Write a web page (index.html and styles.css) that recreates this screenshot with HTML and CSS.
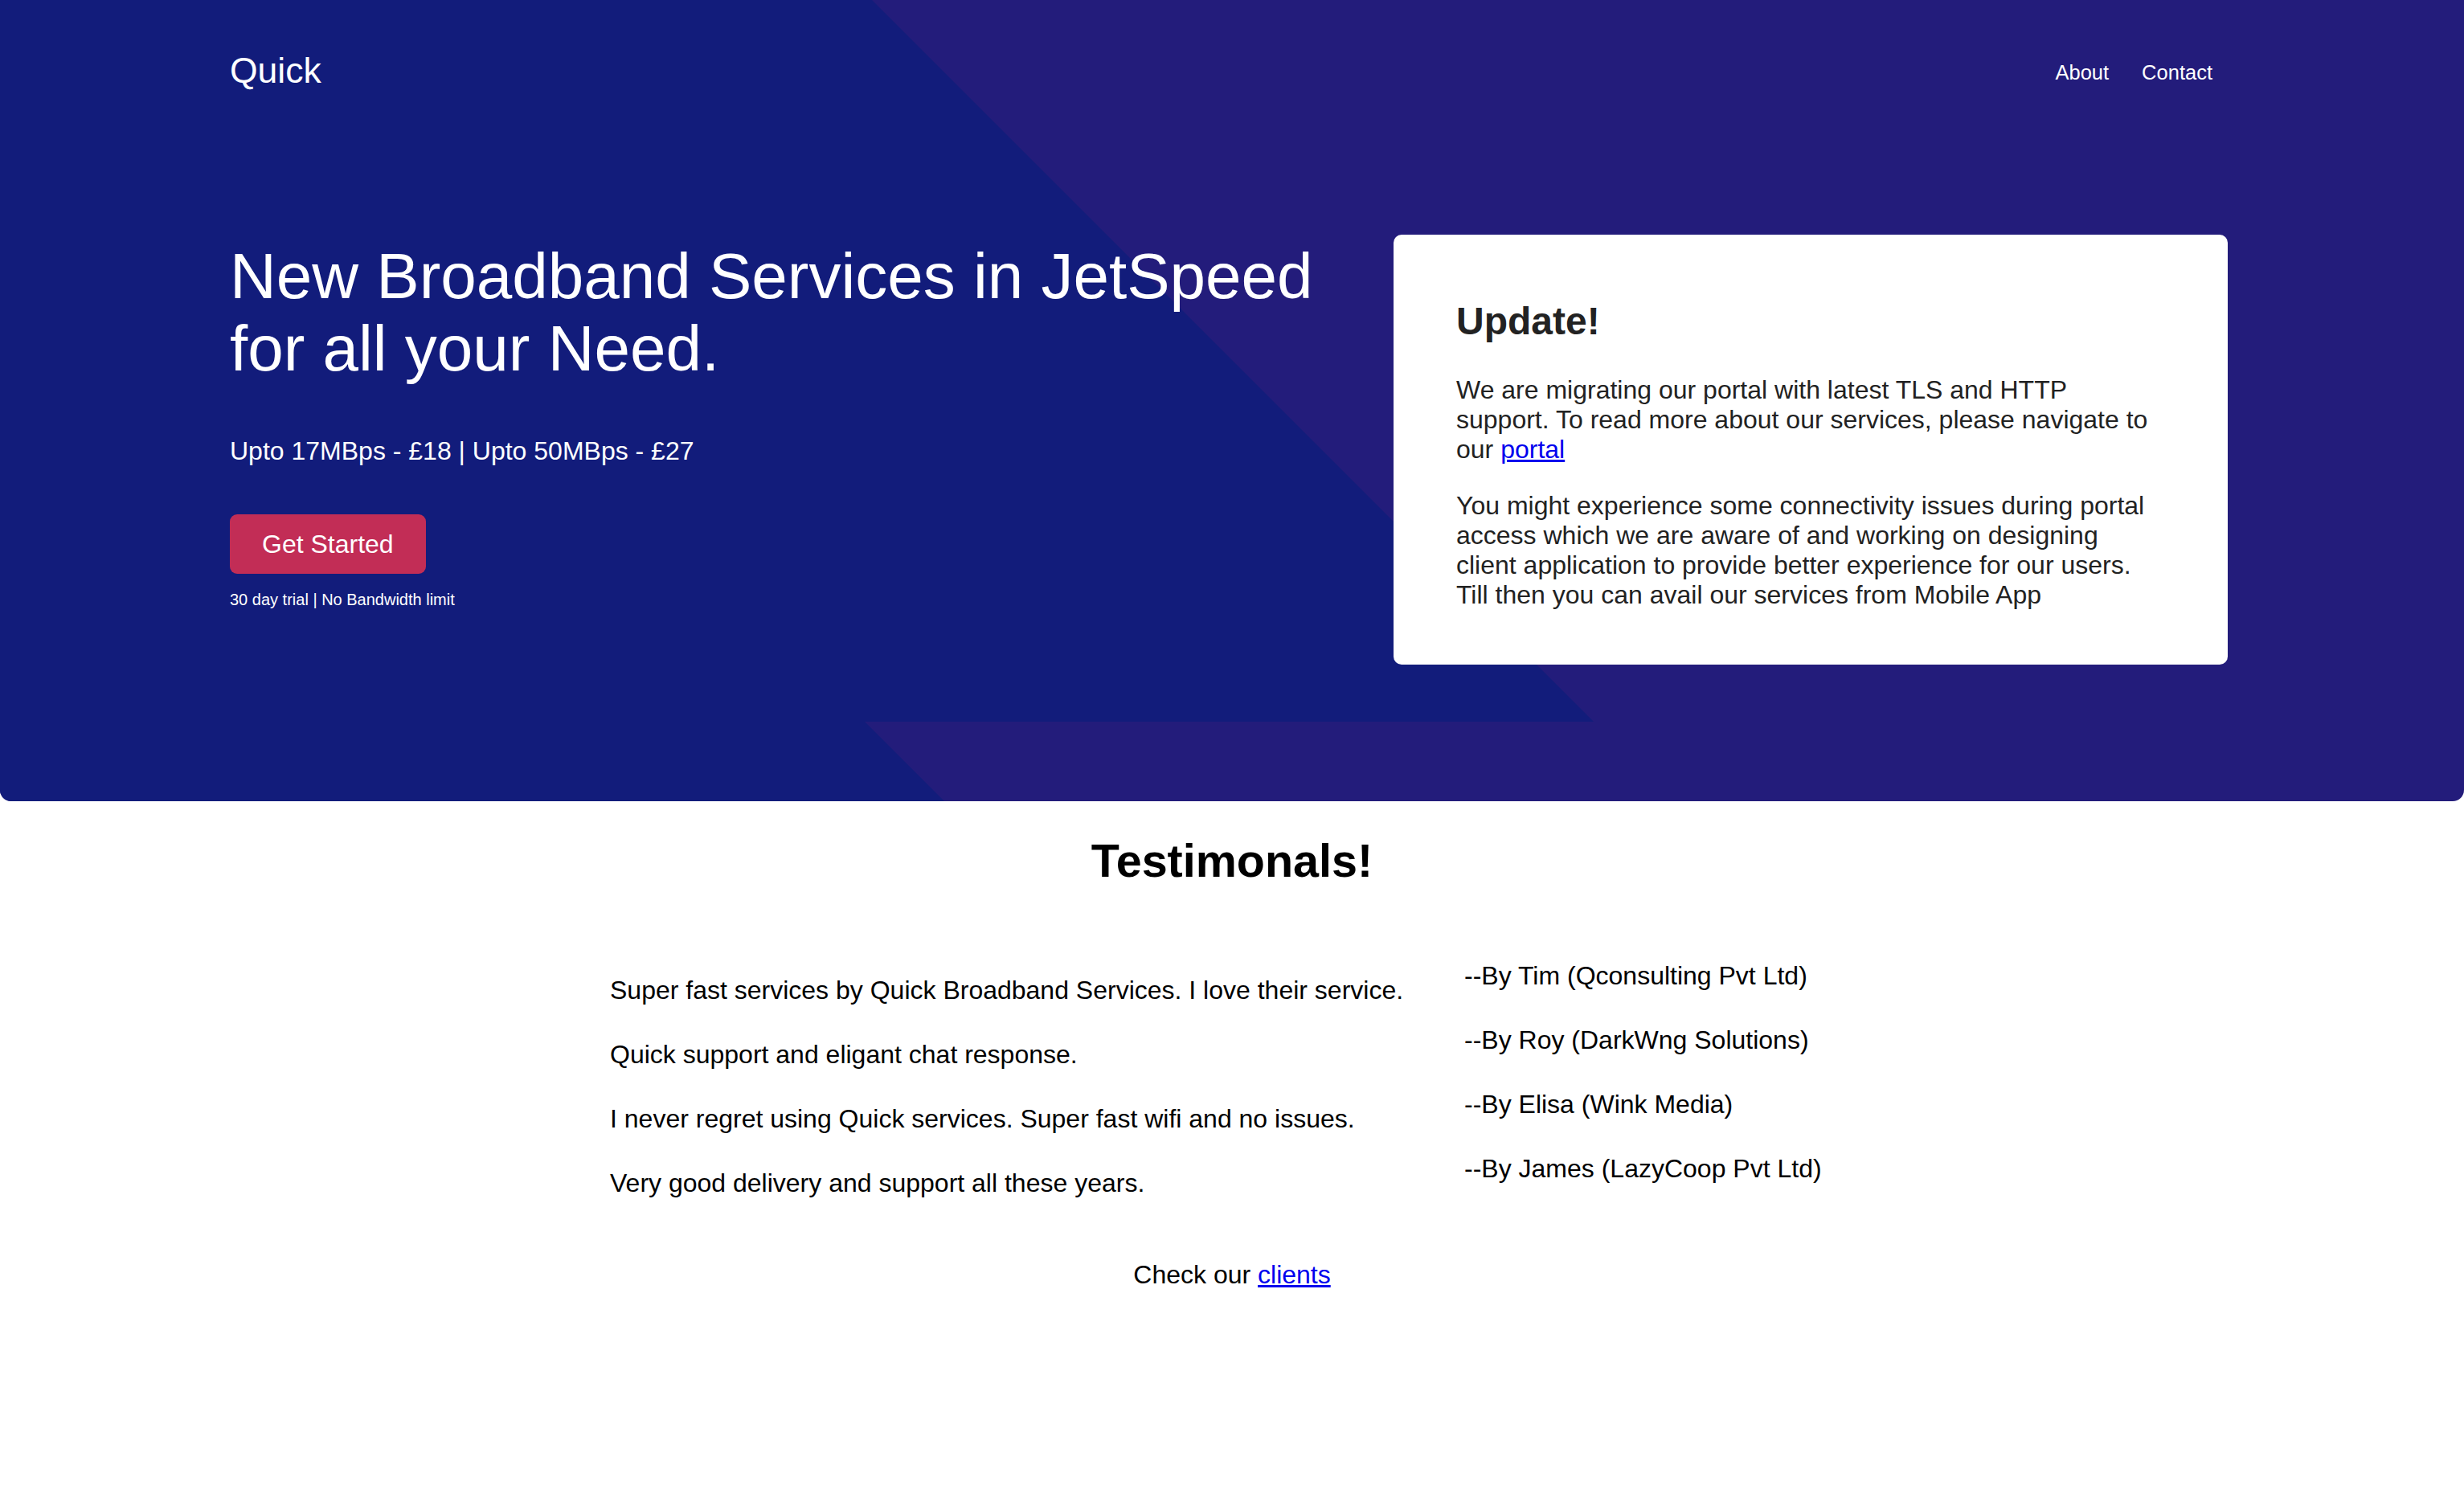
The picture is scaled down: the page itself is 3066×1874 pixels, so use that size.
FILE: index.html
```html
<!DOCTYPE html>
<html lang="en">
<head>
<meta charset="utf-8">
<title>Quick Broadband</title>
<link rel="stylesheet" href="styles.css">
</head>
<body>
<section class="hero">
  <div class="hero-inner">
    <header class="topbar">
      <div class="logo">Quick</div>
      <nav class="nav">
        <a href="#" class="nav-link">About</a>
        <a href="#" class="nav-link">Contact</a>
      </nav>
    </header>
    <div class="hero-row">
      <div class="hero-copy">
        <h1 class="hero-title">New Broadband Services in JetSpeed for all your Need.</h1>
        <p class="hero-sub">Upto 17MBps - £18 | Upto 50MBps - £27</p>
        <a href="#" class="cta">Get Started</a>
        <p class="hero-note">30 day trial | No Bandwidth limit</p>
      </div>
      <div class="card">
        <h2 class="card-title">Update!</h2>
        <p class="card-text card-text-first">We are migrating our portal with latest TLS and HTTP support. To read more about our services, please navigate to our <a href="#" class="link">portal</a></p>
        <p class="card-text">You might experience some connectivity issues during portal access which we are aware of and working on designing client application to provide better experience for our users. Till then you can avail our services from Mobile App</p>
      </div>
    </div>
  </div>
</section>

<section class="testimonials">
  <h2 class="section-title">Testimonals!</h2>
  <div class="quotes">
    <div class="quote-col quote-col-left">
      <p class="quote">Super fast services by Quick Broadband Services. I love their service.</p>
      <p class="quote">Quick support and eligant chat response.</p>
      <p class="quote">I never regret using Quick services. Super fast wifi and no issues.</p>
      <p class="quote">Very good delivery and support all these years.</p>
    </div>
    <div class="quote-col">
      <p class="quote">--By Tim (Qconsulting Pvt Ltd)</p>
      <p class="quote">--By Roy (DarkWng Solutions)</p>
      <p class="quote">--By Elisa (Wink Media)</p>
      <p class="quote">--By James (LazyCoop Pvt Ltd)</p>
    </div>
  </div>
  <p class="clients">Check our <a href="#" class="link">clients</a></p>
</section>
</body>
</html>
```

FILE: styles.css
```css
* { box-sizing: border-box; }

html, body {
  margin: 0;
  padding: 0;
  background: #ffffff;
  font-family: "Liberation Sans", Arial, Helvetica, sans-serif;
}

.hero {
  position: relative;
  height: 997px;
  background: #231c7b;
  border-radius: 0 0 14px 14px;
  overflow: hidden;
  color: #ffffff;
}

.hero::before {
  content: "";
  position: absolute;
  left: 0;
  top: 0;
  width: 100%;
  height: 100%;
  background: #121c7b;
  clip-path: polygon(0 0, 1085px 0, 1983px 898px, 1076px 898px, 1175px 997px, 0 997px);
}

.hero-inner {
  position: relative;
  z-index: 1;
  padding: 0 294px 0 286px;
}

.topbar {
  display: flex;
  justify-content: space-between;
  align-items: center;
  padding-top: 62px;
  height: 113px;
}

.logo {
  font-size: 44.5px;
  line-height: 50px;
  color: #ffffff;
}

.nav {
  display: flex;
  gap: 41px;
  padding-right: 19px;
  padding-top: 5px;
}

.nav-link {
  color: #ffffff;
  text-decoration: none;
  font-size: 25.5px;
  line-height: 30px;
}

.hero-row {
  display: flex;
  align-items: flex-start;
  justify-content: space-between;
  margin-top: 179px;
}

.hero-copy {
  width: 1400px;
  padding-top: 7px;
}

.hero-title {
  margin: 0;
  font-size: 80px;
  line-height: 90px;
  font-weight: normal;
}

.hero-sub {
  margin: 63.6px 0 0;
  font-size: 32px;
  line-height: 36.8px;
}

.cta {
  display: inline-block;
  margin-top: 60.6px;
  padding: 18.6px 40px;
  background: #c22d56;
  color: #ffffff;
  text-decoration: none;
  font-size: 32px;
  line-height: 36.8px;
  border-radius: 9px;
}

.hero-note {
  margin: 21.5px 0 0;
  font-size: 20px;
  line-height: 23px;
}

.card {
  width: 1038px;
  height: 535px;
  background: #ffffff;
  border-radius: 10px;
  padding: 40px 78px;
  color: #222222;
}

.card-title {
  margin: 39.8px 0 0;
  font-size: 48px;
  line-height: 55.2px;
  font-weight: bold;
}

.card-text {
  margin: 34px 0 0;
  font-size: 32px;
  line-height: 36.8px;
}

.card-text-first {
  margin-top: 40px;
}

.link {
  color: #0000ee;
  text-decoration: underline;
}

.testimonials {
  color: #000000;
  padding-top: 41px;
}

.section-title {
  margin: 0;
  text-align: center;
  font-size: 57.5px;
  line-height: 66px;
  font-weight: bold;
}

.quotes {
  width: 1548px;
  margin: 91.6px auto 0;
  display: grid;
  grid-template-columns: 1063px 1fr;
}

.quote-col {
  display: flex;
  flex-direction: column;
  gap: 43.2px;
}

.quote-col-left {
  padding-top: 18px;
}

.quote {
  margin: 0;
  font-size: 32px;
  line-height: 36.8px;
  white-space: nowrap;
}

.clients {
  margin: 77.2px 0 0;
  text-align: center;
  font-size: 32px;
  line-height: 36.8px;
}
```
